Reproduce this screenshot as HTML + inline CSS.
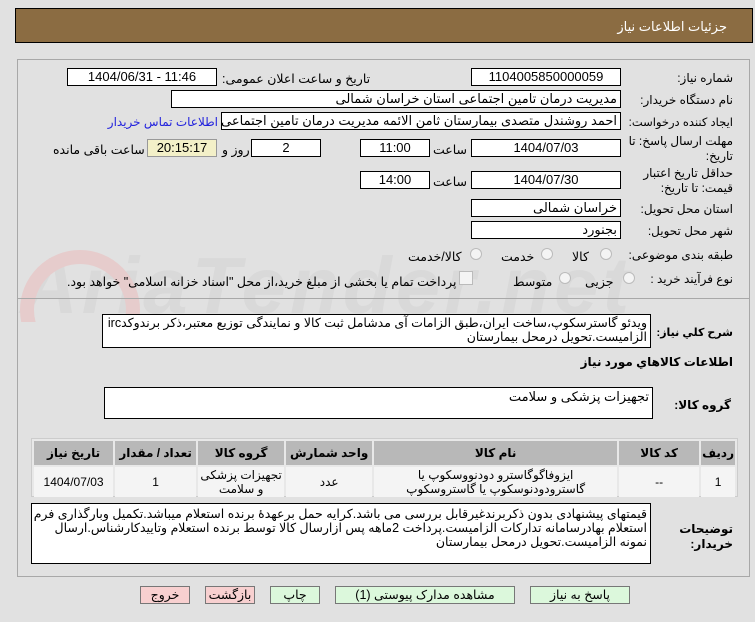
<!DOCTYPE html>
<html><head><meta charset="utf-8"><style>
body{margin:0;width:755px;height:622px;background:#e1e1e1;position:relative;overflow:hidden;font-family:"Liberation Sans","DejaVu Sans",sans-serif;font-size:12px;color:#000}
.a{position:absolute}
.box{position:absolute;background:#fff;border:1px solid #000;box-sizing:border-box;text-align:center;font-size:13px;line-height:16px;white-space:nowrap;overflow:hidden}
.r{text-align:right;padding-right:3px}
.l{position:absolute;white-space:nowrap;direction:rtl;font-size:12.5px}
.lb{position:absolute;right:22px;direction:rtl;font-size:12px;text-align:right}
.rad{position:absolute;width:10px;height:10px;border:1px solid #bbb;border-radius:50%;background:#f4f4f4}
table{border-collapse:separate;border-spacing:2px}
td{background:#f4f4f4;text-align:center;font-size:12px;line-height:14px}
th{background:#b8b8b8;font-size:12px;height:22px}
.btn{position:absolute;top:586px;height:18px;border:1px solid #777;box-sizing:border-box;background:#dcf8dc;text-align:center;font-size:12.5px;line-height:16px;direction:rtl}
.red{background:#f8d0d0}
</style></head><body>
<div class="a" style="left:15px;top:8px;width:738px;height:35px;background:#8b6c42;border:1px solid #000;box-sizing:border-box"></div>
<div class="l" style="right:28px;top:19px;color:#fff;font-size:13px">جزئیات اطلاعات نیاز</div>
<div class="a" style="left:17px;top:59px;width:733px;height:518px;border:1px solid #a8a8a8;box-sizing:border-box"></div>
<div class="a" style="left:20px;top:240px;font-size:80px;font-weight:bold;color:#d9d9d9;letter-spacing:4px;font-style:italic">AriaTender.net</div>
<div class="a" style="left:20px;top:250px;width:120px;height:120px;border:14px solid #e6cccc;border-radius:50%;box-sizing:border-box;clip-path:inset(0 0 40% 0)"></div>

<div class="lb" style="top:71px">شماره نیاز:</div>
<div class="box" style="left:471px;top:68px;width:150px;height:18px">1104005850000059</div>
<div class="l" style="left:222px;top:71px">تاریخ و ساعت اعلان عمومی:</div>
<div class="box" style="left:67px;top:68px;width:150px;height:18px">1404/06/31 - 11:46</div>

<div class="lb" style="top:93px">نام دستگاه خریدار:</div>
<div class="box r" style="left:171px;top:90px;width:450px;height:18px;direction:rtl">مدیریت درمان تامین اجتماعی استان خراسان شمالی</div>

<div class="lb" style="top:115px;font-size:11.5px">ایجاد کننده درخواست:</div>
<div class="box r" style="left:221px;top:112px;width:400px;height:18px;direction:rtl">احمد روشندل متصدی بیمارستان ثامن الائمه مدیریت درمان تامین اجتماعی استان</div>
<div class="l" style="left:112px;top:115px;color:#2222dd;font-size:12px;width:106px;text-align:left">اطلاعات تماس خریدار</div>

<div class="lb" style="top:134px;line-height:15px">مهلت ارسال پاسخ: تا<br>تاریخ:</div>
<div class="box" style="left:471px;top:139px;width:150px;height:18px">1404/07/03</div>
<div class="l" style="left:433px;top:142px">ساعت</div>
<div class="box" style="left:360px;top:139px;width:70px;height:18px">11:00</div>
<div class="box" style="left:251px;top:139px;width:70px;height:18px">2</div>
<div class="l" style="left:222px;top:142px">روز و</div>
<div class="box" style="left:147px;top:139px;width:70px;height:18px;background:#f3f0c8;border-color:#999">20:15:17</div>
<div class="l" style="left:53px;top:142px">ساعت باقی مانده</div>

<div class="lb" style="top:166px;line-height:15px">حداقل تاریخ اعتبار<br>قیمت: تا تاریخ:</div>
<div class="box" style="left:471px;top:171px;width:150px;height:18px">1404/07/30</div>
<div class="l" style="left:433px;top:174px">ساعت</div>
<div class="box" style="left:360px;top:171px;width:70px;height:18px">14:00</div>

<div class="lb" style="top:202px">استان محل تحویل:</div>
<div class="box r" style="left:471px;top:199px;width:150px;height:18px;direction:rtl">خراسان شمالی</div>
<div class="lb" style="top:224px">شهر محل تحویل:</div>
<div class="box r" style="left:471px;top:221px;width:150px;height:18px;direction:rtl">بجنورد</div>

<div class="lb" style="top:248px">طبقه بندی موضوعی:</div>
<div class="rad" style="left:600px;top:248px"></div><div class="l" style="left:572px;top:249px">کالا</div>
<div class="rad" style="left:541px;top:248px"></div><div class="l" style="left:501px;top:249px">خدمت</div>
<div class="rad" style="left:470px;top:248px"></div><div class="l" style="left:408px;top:249px">کالا/خدمت</div>

<div class="lb" style="top:272px">نوع فرآیند خرید :</div>
<div class="rad" style="left:623px;top:272px"></div><div class="l" style="left:585px;top:274px">جزیی</div>
<div class="rad" style="left:559px;top:272px"></div><div class="l" style="left:513px;top:274px">متوسط</div>
<div class="a" style="left:459px;top:271px;width:12px;height:12px;border:1px solid #bbb;background:#f4f4f4"></div>
<div class="l" style="left:67px;top:274px">پرداخت تمام یا بخشی از مبلغ خرید،از محل "اسناد خزانه اسلامی" خواهد بود.</div>
<div class="a" style="left:18px;top:298px;width:731px;border-top:1px solid #a8a8a8"></div>

<div class="lb" style="top:326px;font-weight:bold;font-size:11px">شرح كلي نياز:</div>
<div class="box r" style="left:102px;top:314px;width:549px;height:34px;direction:rtl;white-space:normal;font-size:12.5px;line-height:14px;padding-top:1px">ویدئو گاسترسکوپ،ساخت ایران،طبق الزامات آی مدشامل ثبت کالا و نمایندگی توزیع معتبر،ذکر برندوکدirc الزامیست.تحویل درمحل بیمارستان</div>

<div class="lb" style="top:355px;font-weight:bold">اطلاعات كالاهاي مورد نياز</div>
<div class="lb" style="top:398px;font-weight:bold;right:24px">گروه کالا:</div>
<div class="box r" style="left:104px;top:387px;width:549px;height:32px;direction:rtl;line-height:18px">تجهیزات پزشکی و سلامت</div>

<div class="a" style="left:31px;top:438px;width:707px;height:59px;border:1px solid #ccc;box-sizing:border-box;background:#e8e8e8">
<table style="width:705px;direction:rtl">
<tr><th style="width:27px">ردیف</th><th style="width:78px">کد کالا</th><th style="width:241px">نام کالا</th><th style="width:84px">واحد شمارش</th><th style="width:84px">گروه کالا</th><th style="width:79px">تعداد / مقدار</th><th>تاریخ نیاز</th></tr>
<tr style="height:28px"><td>1</td><td>--</td><td>ایزوفاگوگاسترو دودنووسکوپ یا گاسترودودنوسکوپ یا گاستروسکوپ</td><td>عدد</td><td>تجهیزات پزشکی و سلامت</td><td>1</td><td>1404/07/03</td></tr>
</table></div>

<div class="lb" style="top:522px;font-weight:bold;line-height:15px">توضیحات<br>خریدار:</div>
<div class="box r" style="left:31px;top:503px;width:620px;height:61px;direction:rtl;white-space:normal;font-size:12.5px;line-height:14px;padding-top:3px">قیمتهای پیشنهادی بدون ذکربرندغیرقابل بررسی می باشد.کرایه حمل برعهدهٔ برنده استعلام میباشد.تکمیل وبارگذاری فرم استعلام بهادرسامانه تدارکات الزامیست.پرداخت 2ماهه پس ازارسال کالا توسط برنده استعلام وتاییدکارشناس.ارسال نمونه الزامیست.تحویل درمحل بیمارستان</div>

<div class="btn" style="left:530px;width:100px">پاسخ به نیاز</div>
<div class="btn" style="left:335px;width:180px">مشاهده مدارک پیوستی (1)</div>
<div class="btn" style="left:270px;width:50px">چاپ</div>
<div class="btn red" style="left:205px;width:50px">بازگشت</div>
<div class="btn red" style="left:140px;width:50px">خروج</div>
</body></html>
